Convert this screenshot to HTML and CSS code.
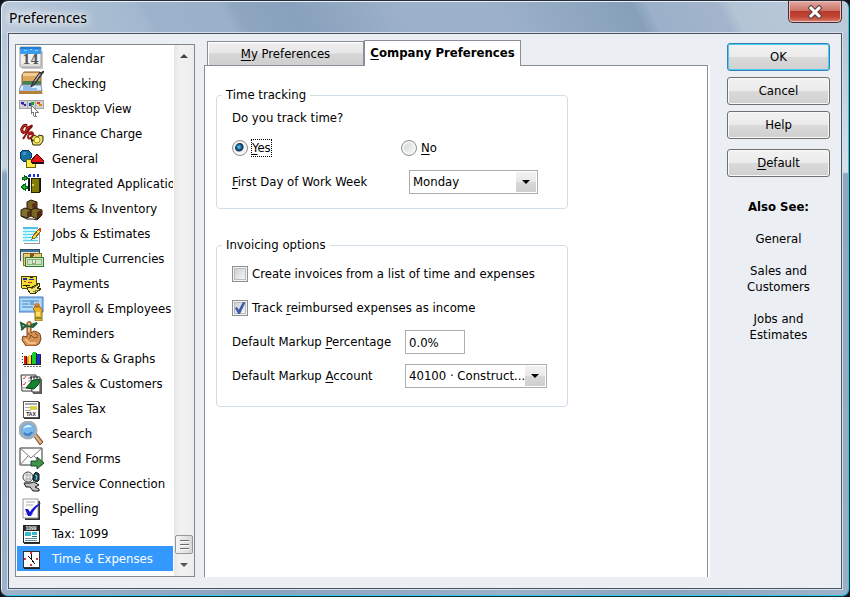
FILE: index.html
```html
<!DOCTYPE html>
<html lang="en">
<head>
<meta charset="utf-8">
<title>Preferences</title>
<link rel="stylesheet" href="styles.css">
</head>
<body>
<div class="window">
  <header class="titlebar">
    <h1 class="title">Preferences</h1>
    <button class="close" type="button" aria-label="Close">
      <svg width="16" height="14" viewBox="0 0 16 14"><path d="M4 3l8 8M12 3l-8 8" stroke="#5d3b3d" stroke-width="5" stroke-linecap="square"/><path d="M4 3l8 8M12 3l-8 8" stroke="#fff" stroke-width="3" stroke-linecap="square"/></svg>
    </button>
  </header>
  <main class="client">
    <nav class="sidebar" aria-label="Categories">
      <ul class="list">
        <li><a class="item" href="#"><svg class="icon" viewBox="0 0 25 25"><path d="M3 22h20V5" fill="none" stroke="#c9c9c9" stroke-width="2"/><rect x="1" y="1" width="21" height="20" rx="1" fill="#f1f1f1" stroke="#9a9a9a"/><path d="M1 1h21v7H1z" fill="#3a9cec"/><path d="M1 1h21v2H1z" fill="#1f7fd6"/><path d="M5 4h3v1H5zM11 3h2v1h-2zM16 4h3v1h-3z" fill="#8fd0ff"/><path d="M2 18h19v2H2z" fill="#dcdcdc"/><text x="11.500" y="18" class="digits" text-anchor="middle">14</text></svg>Calendar</a></li>
        <li><a class="item" href="#"><svg class="icon" viewBox="0 0 25 25"><path d="M3 23h21l-2-6z" fill="#c5c5c5"/><path d="M3 4l2-3h16l1 4v9H3z" fill="#dfa75c" stroke="#8b5d28"/><path d="M4 2h16v3H4z" fill="#efcf96"/><path d="M4 10h18v4H3z" fill="#477e53"/><path d="M2 14h20l1 6H0z" fill="#dcecff" stroke="#7690ae"/><path d="M0 20h23v3H0z" fill="#b57f3c"/><path d="M4 16h8M4 18h14" stroke="#4686d3"/><path d="M21 1l-7 10-2 5 4-3 7-10z" fill="#5c5c5c" stroke="#262626"/><path d="M24 0l-2 3M21 3l-5 7" stroke="#d0d0d0"/><path d="M25 0l-3 3" stroke="#333" stroke-width="2"/></svg>Checking</a></li>
        <li><a class="item" href="#"><svg class="icon pixel" viewBox="0 0 25 25"><path d="M0 4h25v9H0z" fill="#a5a5a5"/><path d="M1 5h7v7H1zM9 5h7v7H9zM17 5h7v7h-7z" fill="#d2d2d2"/><path d="M2 6h3v2H2zM5 8h2v2H5z" fill="#2727b5"/><path d="M3 8h2v1H3z" fill="#a43aa4"/><path d="M10 7h3v3h-3z" fill="#1f38c0"/><path d="M12 6h3v3h-3z" fill="#16a02c"/><path d="M18 6h3v2h-3z" fill="#e23b17"/><path d="M20 8h3v2h-3z" fill="#e18a00"/><path d="M12 9v9l2-2 1 4h2l-1-4h3z" fill="#fff" stroke="#777"/></svg>Desktop View</a></li>
        <li><a class="item" href="#"><svg class="icon" viewBox="0 0 25 25"><path d="M8 5C5 3 2 7 3 10s5 1 5-2 5 0 4-4" fill="none" stroke="#7b1010" stroke-width="3"/><path d="M8 5C5 3 2 7 3 10s5 1 5-2 5 0 4-4" fill="none" stroke="#e13a32"/><path d="M13 4L4 18" stroke="#8b1111" stroke-width="2"/><path d="M9 13c2-3 6-2 5 1s-5 5-5 2 2-4 5-2" fill="none" stroke="#a41818" stroke-width="2"/><path d="M12 18l3-4 4 2 1-2 4 1v5l-3 4h-7z" fill="#ece171" stroke="#302a00"/><circle cx="18" cy="19" r="3" fill="#fff68f" stroke="#a18d12"/><path d="M12 18l3 1-2 2z" fill="#181818"/></svg>Finance Charge</a></li>
        <li><a class="item" href="#"><svg class="icon pixel" viewBox="0 0 25 25"><path d="M4 4h5l3 3v5l-3 3H4l-3-3V7z" fill="#1670a5" stroke="#063b60"/><path d="M4 6h3v3H4z" fill="#4299bd"/><path d="M7 13h9v8H7z" fill="#ffec43" stroke="#6f6500"/><path d="M12 15l6-7 7 7v1H12z" fill="#e31616" stroke="#590000"/><path d="M13 16h12v2H13z" fill="#211111"/></svg>General</a></li>
        <li><a class="item" href="#"><svg class="icon pixel" viewBox="0 0 25 25"><path d="M9 3h12v3H8z" fill="#fff"/><path d="M10 3h2v3H9V4zM14 3h2v3h-2zM18 3h2v3h-2z" fill="#1730e2"/><path d="M10 7v13M21 7v14" stroke="#111" stroke-width="2"/><path d="M12 7h8v14h-8z" fill="#817c08" stroke="#262300"/><path d="M13 13h2v2h-2z" fill="#d8d157"/><path d="M3 6h2V4l4 3-4 3V8H3zM8 15H6v-2l-4 3 4 3v-2h2z" fill="#15c82f" stroke="#075f12"/></svg>Integrated Applications</a></li>
        <li><a class="item" href="#"><svg class="icon" viewBox="0 0 25 25"><path d="M8 6l4-2 6 2v7l-4 2-6-2z" fill="#7a6522" stroke="#241909"/><path d="M13 8l5-2v7l-4 2z" fill="#593018"/><path d="M2 14l4-2 6 2v6l-4 2-6-2z" fill="#80702b" stroke="#241909"/><path d="M8 16l4-2v6l-4 2z" fill="#573119"/><path d="M12 14l4-2 7 2v5l-5 4-6-3z" fill="#7d6524" stroke="#241909"/><path d="M18 16l5-2v5l-5 4z" fill="#502813"/><path d="M2 20l6 3h6l4 1 4-4" fill="none" stroke="#201811"/></svg>Items &amp; Inventory</a></li>
        <li><a class="item" href="#"><svg class="icon pixel" viewBox="0 0 25 25"><path d="M5 22h15V8" fill="none" stroke="#999" stroke-width="1"/><path d="M4 6h15v15H4z" fill="#d2faff"/><path d="M4 6h15v2H4z" fill="#53bfe4"/><path d="M4 10h15M4 13h15M4 16h15M4 19h15" stroke="#54cdf0"/><path d="M6 8v13" stroke="#91ecff"/><path d="M20 8l2 2-6 7-3 1 1-3z" fill="#ffd640" stroke="#806213"/><path d="M20 7h2v3h-2z" fill="#e63823"/></svg>Jobs &amp; Estimates</a></li>
        <li><a class="item" href="#"><svg class="icon pixel" viewBox="0 0 25 25"><path d="M1 3h19v11H1z" fill="#42708d" stroke="#234d68"/><path d="M2 6h18v10H2z" fill="#dde5e7"/><path d="M4 7h18v12H4z" fill="#e4cb75" stroke="#936d1d"/><circle cx="13" cy="9" r="2" fill="#805515"/><path d="M6 11h18v9H6z" fill="#cfe6c4" stroke="#317b32"/><path d="M8 13h14v5H8z" fill="none" stroke="#8bb279"/><path d="M13 13h4v5h-4z" fill="#8eaa7c"/><path d="M14 14h2v3h-2z" fill="#e4f0d9"/></svg>Multiple Currencies</a></li>
        <li><a class="item" href="#"><svg class="icon pixel" viewBox="0 0 25 25"><path d="M3 5h14v9l-3 3H3l-1-3V6z" fill="#f2dc36" stroke="#4c4300"/><path d="M4 7h4v2H4zM10 8h5v1h-5z" fill="#1830bb"/><path d="M5 10h2v1H5zM9 11h4v1H9z" fill="#ba271b"/><path d="M4 14h7M11 6h3" stroke="#221f00"/><path d="M8 16l4 1 8-5 1 3-3 2 4 1-7 5-4-1-2-3z" fill="#eee580" stroke="#373200"/><path d="M12 18l7-4M14 21l5-2" stroke="#8c7d10"/></svg>Payments</a></li>
        <li><a class="item" href="#"><svg class="icon" viewBox="0 0 25 25"><path d="M0 1h24v15H0z" fill="#91c5ef" stroke="#4379bf"/><path d="M2 3h20v11H2z" fill="#b4dbf8"/><path d="M3 5h8M3 8h7M3 11h11M15 5h5" stroke="#3f82c5"/><path d="M11 4h4v5h-4z" fill="#6ba6d8"/><circle cx="18" cy="10" r="3" fill="#cb7d3c"/><path d="M14 13l2-2h5l2 2v12h-7V15z" fill="#ecb42b" stroke="#926b16"/><path d="M17 16h4v4h-4z" fill="#ffe16b"/><path d="M16 22h6" stroke="#88912e" stroke-width="2"/></svg>Payroll &amp; Employees</a></li>
        <li><a class="item" href="#"><svg class="icon" viewBox="0 0 25 25"><path d="M8 2c1-2 4-2 4 0v10l3-2 3 1 3 2 1 5-2 5-4 2H7l-4-6 1-4 4 1z" fill="#d69254" stroke="#764018"/><path d="M10 2v9M6 18l4 4h7" fill="none" stroke="#f5bd82" stroke-width="2"/><path d="M12 14l3 3 4-1M16 12l3 3M9 12l3 3-2 3" fill="none" stroke="#8b4e20"/><path d="M8 5L2 2l1 5 5-2 6 1 4-4-6 2M2 9l3-2" fill="none" stroke="#22603a" stroke-width="2"/></svg>Reminders</a></li>
        <li><a class="item" href="#"><svg class="icon pixel" viewBox="0 0 25 25"><path d="M3 7h1v1H3zM3 10h1v1H3zM3 13h1v1H3zM3 16h1v1H3z" fill="#333"/><path d="M5 10h3v8H5z" fill="#e11818"/><path d="M8 11l2-2h1v9H8z" fill="#ff9622"/><path d="M10 9h3v9h-3z" fill="#ffed26"/><path d="M13 7l2-1h2v12h-4z" fill="#18cd2b"/><path d="M18 8h4v10h-4z" fill="#1931d3"/><path d="M4 18h18v1H4zM7 10h1v8H7zM12 9h1v9h-1zM17 7h1v11h-1zM21 9h1v9h-1z" fill="#222"/><path d="M5 20h17" stroke="#777" stroke-dasharray="2 1"/></svg>Reports &amp; Graphs</a></li>
        <li><a class="item" href="#"><svg class="icon" viewBox="0 0 25 25"><path d="M2 4h15v16H3z" fill="#fff" stroke="#333"/><path d="M4 7l1 1 2-3M4 13l1 1 2-3" fill="none" stroke="#e34242"/><path d="M9 7h6M9 10h5M4 17h4" stroke="#888"/><path d="M12 6h9v15h-8z" fill="#fff" stroke="#333"/><path d="M12 11l2-2 8-1-3 6-4 4-8-1z" fill="#168330" stroke="#07431a"/><path d="M12 5v3M15 5v3M18 5v3" stroke="#222"/><path d="M14 22h8V8" fill="none" stroke="#5e5e5e" stroke-width="2"/></svg>Sales &amp; Customers</a></li>
        <li><a class="item" href="#"><svg class="icon pixel" viewBox="0 0 25 25"><path d="M5 22h15V6" fill="none" stroke="#333" stroke-width="2"/><path d="M4 5h15v16H4z" fill="#fff" stroke="#555"/><path d="M6 7h12v2H6zM6 14h6v1H6zM6 11h5v1H6z" fill="#aaa"/><path d="M11 10h7v4h-7z" fill="#ded14e"/><text x="12" y="20" class="tiny" text-anchor="middle">TAX</text></svg>Sales Tax</a></li>
        <li><a class="item" href="#"><svg class="icon" viewBox="0 0 25 25"><path d="M14 14l3-2 7 9-3 3z" fill="#b88552" stroke="#785231"/><path d="M16 14l6 8" stroke="#e2b789" stroke-width="2"/><circle cx="9" cy="9" r="8" fill="#579fe0" stroke="#a2afbb" stroke-width="3"/><circle cx="9" cy="9" r="6" fill="#78b8ee"/><path d="M4 8c2-5 7-5 9-2-3 0-6 0-9 2z" fill="#e2f7ff"/><path d="M5 12c3 3 6 2 8-1" stroke="#3c7ec3" stroke-width="2" fill="none"/></svg>Search</a></li>
        <li><a class="item" href="#"><svg class="icon" viewBox="0 0 25 25"><path d="M1 2h22v17H1z" fill="#fff" stroke="#333"/><path d="M1 2l11 10L23 2M1 19l8-9M23 19l-8-9" fill="none" stroke="#777"/><path d="M12 15h6v-4l7 6-7 6v-3h-6z" fill="#43924c" stroke="#194923"/></svg>Send Forms</a></li>
        <li><a class="item" href="#"><svg class="icon" viewBox="0 0 25 25"><circle cx="9" cy="6" r="5" fill="#f0f0f0" stroke="#444"/><path d="M6 4h6M6 8h6M8 2v8M11 3v6" stroke="#aaa"/><path d="M15 3l2-2 3 2v6l-2 2-4-2z" fill="#174f62" stroke="#111"/><path d="M16 4l2 1-1 4" fill="none" stroke="#8bd0d5"/><path d="M5 12h6l4-1 5 3-4 2 4 2v2h-6l-3-4H7z" fill="#c2c2c2" stroke="#171717"/></svg>Service Connection</a></li>
        <li><a class="item" href="#"><svg class="icon" viewBox="0 0 25 25"><path d="M6 23h14V5" fill="none" stroke="#333" stroke-width="2"/><path d="M4 3h15v19H4z" fill="#fff" stroke="#999"/><path d="M7 6h9M7 9h7M6 18h9" stroke="#aaa"/><path d="M6 13h3l2 3c3-5 6-7 11-9-5 5-8 8-10 13H9z" fill="#1713d8"/></svg>Spelling</a></li>
        <li><a class="item" href="#"><svg class="icon pixel" viewBox="0 0 25 25"><path d="M5 22h15V6" fill="none" stroke="#333" stroke-width="2"/><path d="M4 4h16v17H4z" fill="#fff" stroke="#222"/><path d="M4 4h16v6H4z" fill="#262626"/><text x="12" y="9" class="tiny light" text-anchor="middle">1099</text><path d="M6 11h6v4H6zM13 11h5v3h-5z" fill="#35bccf"/><path d="M6 17h12M6 19h12" stroke="#668f99"/><path d="M13 15h5" stroke="#146f7f"/></svg>Tax: 1099</a></li>
        <li><a class="item selected" href="#" aria-current="page"><svg class="icon pixel" viewBox="0 0 25 25"><path d="M5 22h15V6" fill="none" stroke="#222" stroke-width="2"/><path d="M4 5h16v16H4z" fill="#fff" stroke="#333"/><path d="M11 6h2v2h-2zM11 18h2v2h-2zM5 12h2v2H5zM17 12h2v2h-2z" fill="#d63b2f"/><path d="M12 8v5l4 5M9 10l3 3" fill="none" stroke="#111" stroke-width="1"/></svg>Time &amp; Expenses</a></li>
      </ul>
      <div class="scrollbar">
        <button class="arrow" type="button" aria-label="Scroll up"><svg width="8" height="4" viewBox="0 0 8 4"><path d="M0 4l4-4 4 4z" fill="#454545"/></svg></button>
        <div class="track"><div class="thumb"></div></div>
        <button class="arrow" type="button" aria-label="Scroll down"><svg width="8" height="4" viewBox="0 0 8 4"><path d="M0 0l4 4 4-4z" fill="#555"/></svg></button>
      </div>
    </nav>

    <section class="content">
      <div class="tabs" role="tablist">
        <button class="tab" type="button" role="tab" aria-selected="false"><u>M</u>y Preferences</button>
        <button class="tab active" type="button" role="tab" aria-selected="true"><u>C</u>ompany Preferences</button>
      </div>
      <div class="panel" role="tabpanel">
        <fieldset class="group time">
          <legend>Time tracking</legend>
          <p class="question">Do you track time?</p>
          <div class="choice-row">
            <label class="choice"><input type="radio" name="track" checked><span class="focus"><u>Y</u>es</span></label>
            <label class="choice"><input type="radio" name="track"><span><u>N</u>o</span></label>
          </div>
          <div class="field">
            <label for="day"><u>F</u>irst Day of Work Week</label>
            <span class="combo day"><select id="day"><option>Monday</option></select><svg class="drop" viewBox="0 0 20 20"><path d="M6 8h8l-4 4z" fill="#000"/></svg></span>
          </div>
        </fieldset>
        <fieldset class="group invoicing">
          <legend>Invoicing options</legend>
          <label class="choice"><input type="checkbox"><span>Create invoices from a list of time and expenses</span></label>
          <label class="choice"><input type="checkbox" checked><span>Track <u>r</u>eimbursed expenses as income</span></label>
          <div class="field">
            <label for="percent">Default Markup <u>P</u>ercentage</label>
            <input class="percent" id="percent" type="text" value="0.0%">
          </div>
          <div class="field">
            <label for="account">Default Markup <u>A</u>ccount</label>
            <span class="combo account"><select id="account"><option>40100 · Construct...</option></select><svg class="drop" viewBox="0 0 20 20"><path d="M6 8h8l-4 4z" fill="#000"/></svg></span>
          </div>
        </fieldset>
      </div>
    </section>

    <aside class="actions">
      <button class="btn primary" type="button">OK</button>
      <button class="btn" type="button">Cancel</button>
      <button class="btn" type="button">Help</button>
      <button class="btn default" type="button"><u>D</u>efault</button>
      <h2 class="also">Also See:</h2>
      <a class="see" href="#">General</a>
      <a class="see" href="#">Sales and<br>Customers</a>
      <a class="see" href="#">Jobs and<br>Estimates</a>
    </aside>
  </main>
</div>
</body>
</html>
```
FILE: styles.css
```css
* { box-sizing: border-box; }

body {
  margin: 0;
  background: #10141c;
  color: #000;
  font: 13px/16px "DejaVu Sans Condensed", "Noto Sans", sans-serif;
}

button, input, select { font: inherit; color: inherit; margin: 0; }
a { color: inherit; text-decoration: none; }
u { text-underline-offset: 2px; }

.window {
  display: flex;
  flex-direction: column;
  min-height: 100vh;
  padding: 0 7px 7px 7px;
  border: 1px solid #262c38;
  border-right-color: #12303c;
  border-bottom-color: #12303c;
  border-radius: 8px;
  box-shadow: inset 1px 1px #e9f1f8, inset -1px -1px #2fc8ee;
  background:
    linear-gradient(63deg, #bccbdd, #a9bdd2 90px, #a3b8cf 134px, #9db3cb 140px, #9bb1ca 208px, #8ea6c0 220px, #88a1bc 270px, #9db1ca 370px, #9db1ca 450px, #86a0ba 575px, #9cb0c9 590px, #a2b5cc 652px, #b3c4d5 664px, #bccbdb) 0 0 / 100% 33px no-repeat,
    linear-gradient(#b7c6d9, #d5e1ec 138px, #8fa5c0 140px, #9db0c8) 100% 33px / 8px 100% no-repeat,
    linear-gradient(#b5c8db, #c5d5e3 134px, #8aa3bf 140px, #9fb4cb) 0 33px / 8px 100% no-repeat,
    linear-gradient(90deg, #9fb4cb, #8aa3bf 30%, #9bb1ca 60%, #8aa4bf 78%, #9fb4ca);
}

.titlebar {
  display: flex;
  align-items: center;
  justify-content: space-between;
  height: 32px;
}

.title {
  margin: 0;
  padding: 2px 12px 0 1px;
  font: 14px/22px "Noto Sans", sans-serif;
  text-shadow: 0 0 6px #fff, 0 0 10px #fff, 0 0 14px #fff;
}

.close {
  display: grid;
  place-items: center;
  align-self: flex-start;
  width: 54px;
  height: 22px;
  padding: 0;
  border: 1px solid #4d2a31;
  border-top: 0;
  border-radius: 0 0 5px 5px;
  background: linear-gradient(#dfaaa4, #cf7568 45%, #b63a2c 50%, #c24534 75%, #d7816a);
  box-shadow: inset 0 0 0 1px #ebc1b9;
}

.client {
  display: flex;
  flex: 1;
  padding: 6px 11px 11px 6px;
  border: 1px solid #4b5462;
  box-shadow: 0 0 0 1px #d5e0ea;
  background: #ebeef3;
}

.sidebar {
  display: flex;
  width: 180px;
  margin: 4px 9px 0 0;
  border: 1px solid #828790;
  background: #fff;
}

.list {
  flex: 1;
  min-width: 0;
  margin: 0;
  padding: 1px 0 5px 1px;
  list-style: none;
}

.item {
  display: flex;
  align-items: center;
  gap: 8px;
  height: 25px;
  padding-left: 2px;
  overflow: hidden;
  white-space: nowrap;
}

.selected { background: #3399ff; color: #fff; }

.icon { flex: none; width: 25px; height: 25px; }
.pixel { shape-rendering: crispEdges; }
.digits { font: bold 12px "DejaVu Serif", serif; fill: #555; }
.tiny { font: bold 5px "Liberation Sans", sans-serif; fill: #222; }
.light { fill: #fff; }

.scrollbar {
  display: flex;
  flex-direction: column;
  width: 20px;
  margin-left: 1px;
  background: linear-gradient(90deg, #e6e6e6, #f2f2f2 30%, #ededed);
}

.arrow {
  display: grid;
  place-items: center;
  height: 22px;
  padding: 0;
  border: 0;
  background: none;
}

.track {
  display: flex;
  flex: 1;
  align-items: flex-end;
  justify-content: center;
}

.thumb {
  width: 18px;
  height: 19px;
  border: 1px solid #979797;
  border-radius: 2px;
  background:
    repeating-linear-gradient(#6b6b6b 0 1px, #fafafa 1px 2px, transparent 2px 4px) center / 9px 10px no-repeat,
    linear-gradient(90deg, #f5f5f5, #d6d6d6);
}

.content {
  display: flex;
  flex: 1;
  flex-direction: column;
  min-width: 0;
}

.tabs {
  display: flex;
  align-items: flex-end;
  padding-left: 3px;
}

.tab {
  width: 157px;
  height: 24px;
  padding: 0;
  border: 1px solid #8a8e98;
  border-bottom: 0;
  background: linear-gradient(#f0f0f0, #e6e6e6 48%, #d6d6d6 52%, #cfcfcf);
  box-shadow: inset 1px 1px #fff;
}

.tab.active {
  height: 26px;
  margin-bottom: -1px;
  padding-bottom: 2px;
  background: #fff;
  font-weight: bold;
  z-index: 1;
}

.panel {
  flex: 1;
  padding: 21px 11px;
  border: 1px solid #8a8e98;
  border-bottom: 0;
  background: #fff;
  box-shadow: 2px 0 #fff;
}

.group {
  display: grid;
  max-width: 352px;
  margin: 0 0 28px;
  border: 1px solid #d0dde8;
  border-radius: 4px;
}

.group legend { margin-left: -10px; padding: 0 4px; }
.time { gap: 14px; padding: 7px 15px 14px; }
.invoicing { gap: 10px; padding: 9px 15px 18px; }

.question { margin: 0; }

.choice-row, .field {
  display: grid;
  grid-template-columns: 177px 1fr;
  align-items: center;
}

.choice-row { grid-template-columns: 169px 1fr; }
.invoicing .field { grid-template-columns: 173px 1fr; }
.invoicing .choice { height: 24px; }

.choice { display: flex; align-items: center; gap: 4px; height: 16px; }

.focus { outline: 1px dotted #000; }

input[type="radio"], input[type="checkbox"] {
  flex: none;
  width: 16px;
  height: 16px;
  border: 1px solid #8e8f8f;
  appearance: none;
}

input[type="radio"] {
  border-radius: 50%;
  background: linear-gradient(135deg, #cfd3d6, #fafafa);
  box-shadow: inset 0 0 0 2px #f4f4f4;
}

input[type="radio"]:checked {
  background: radial-gradient(circle at 6px 6px, #7fd3f5 0, #1e77ab 2px, #0c2c50 4px, #f4f4f4 5px);
}

input[type="checkbox"] {
  background: linear-gradient(135deg, #cdd0d3, #f6f6f6) center / 10px 10px no-repeat;
  box-shadow: inset 0 0 0 1px #f4f4f4, inset 0 0 0 2px #b9bdc1;
}

input[type="checkbox"]:checked::after {
  content: "";
  display: block;
  width: 12px;
  height: 12px;
  margin: 1px;
  background: #3d5ba9;
  clip-path: polygon(8% 50%, 25% 42%, 40% 65%, 75% 0, 95% 5%, 50% 100%, 35% 100%);
}

.combo { position: relative; display: block; height: 24px; }
.day { width: 129px; }
.account { width: 142px; }

select, .percent {
  width: 100%;
  height: 24px;
  padding: 0 3px;
  border: 1px solid #abadb3;
  border-radius: 0;
  background: #fff;
  appearance: none;
}

.percent { width: 60px; }

.drop {
  position: absolute;
  top: 2px;
  right: 2px;
  width: 20px;
  height: 20px;
  background: linear-gradient(#f2f2f2, #e8e8e8 48%, #d8d8d8 52%, #cfcfcf);
  pointer-events: none;
}

.actions {
  display: flex;
  flex-direction: column;
  width: 103px;
  margin: 3px 0 0 19px;
  text-align: center;
}

.btn {
  height: 28px;
  margin-bottom: 6px;
  padding: 0;
  border: 1px solid #707070;
  border-radius: 3px;
  background: linear-gradient(#f2f2f2, #ebebeb 48%, #dadada 52%, #cfcfcf);
  box-shadow: inset 0 0 0 1px #f8f8f8;
}

.primary { border-color: #3c7fb1; box-shadow: inset 0 0 0 1px #45cdf5; }
.default { margin: 4px 0 22px; }

.also { margin: 0 0 16px; font-size: 13px; line-height: 16px; }
.see { margin-bottom: 16px; }
```
